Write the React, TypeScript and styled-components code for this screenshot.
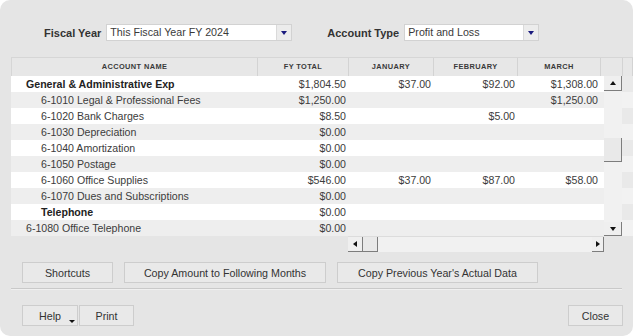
import React from "react";
import styled, { createGlobalStyle } from "styled-components";

const GlobalStyle = createGlobalStyle`
  html, body {
    margin: 0;
    padding: 0;
    background: #ffffff;
  }
  body {
    font-family: "Liberation Sans", Arial, sans-serif;
    color: #333333;
  }
`;

const Window = styled.div`
  width: 633px;
  height: 336px;
  background: #e5e5e5;
  border-radius: 10px;
  overflow: hidden;
  display: flex;
  flex-direction: column;
  font-size: 10.7px;
`;

const FilterBar = styled.div`
  display: flex;
  align-items: center;
  padding: 24px 0 0 44px;
  gap: 35px;
`;

const Field = styled.div`
  display: flex;
  align-items: center;
  gap: 5px;
`;

const Label = styled.span`
  font-weight: 700;
  font-size: 11px;
  color: #333;
`;

const Select = styled.div<{ $width: number }>`
  width: ${(p) => p.$width}px;
  height: 17px;
  box-sizing: border-box;
  border: 1px solid #d2d2d2;
  background: #ffffff;
  display: flex;
  align-items: stretch;
`;

const SelectText = styled.span`
  flex: 1;
  padding-left: 3px;
  line-height: 15px;
  font-size: 10.7px;
  color: #3a3a3a;
`;

const SelectArrow = styled.span`
  width: 14px;
  border-left: 1px solid #dadada;
  background: #ececec;
  display: flex;
  align-items: center;
  justify-content: center;
  &::after {
    content: "";
    border-left: 3px solid transparent;
    border-right: 3px solid transparent;
    border-top: 4px solid #1b1b7e;
  }
`;

const Table = styled.div`
  margin: 16px 0 0 11px;
  display: flex;
  flex-direction: column;
`;

const HeaderRow = styled.div`
  display: grid;
  grid-template-columns: 246px 91px 85px 84px 83px 22px 1fr;
  height: 19px;
  box-sizing: border-box;
  border-top: 1px solid #d6d6d6;
  border-left: 1px solid #d6d6d6;
  background: #e7e7e7;
`;

const HeaderCell = styled.div`
  border-right: 1px solid #d3d3d3;
  font-size: 7.4px;
  font-weight: 700;
  letter-spacing: 0.4px;
  color: #3a3a3a;
  text-align: center;
  line-height: 18px;
`;

const Body = styled.div`
  display: flex;
  height: 160px;
`;

const Rows = styled.div`
  width: 593px;
  display: flex;
  flex-direction: column;
`;

const Row = styled.div<{ $odd: boolean }>`
  display: grid;
  grid-template-columns: 246px 91px 85px 84px 83px 4px;
  height: 16px;
  background: ${(p) => (p.$odd ? "#eeeeee" : "#ffffff")};
  line-height: 16px;
  font-size: 10.6px;
  color: #3c3c3c;
`;

const NameCell = styled.div<{ $indent: number; $bold?: boolean }>`
  padding-left: ${(p) => p.$indent}px;
  font-weight: ${(p) => (p.$bold ? 700 : 400)};
  color: ${(p) => (p.$bold ? "#222" : "#3c3c3c")};
  white-space: nowrap;
`;

const ValueCell = styled.div`
  text-align: right;
  padding-right: 2px;
  white-space: nowrap;
`;

const VScroll = styled.div`
  width: 18px;
  display: flex;
  flex-direction: column;
  background: #f1f1f1;
`;

const ArrowButton = styled.div<{ $dir: "up" | "down" | "left" | "right"; $size: number }>`
  ${(p) =>
    p.$dir === "up" || p.$dir === "down"
      ? `height: ${p.$size}px;`
      : `width: ${p.$size}px;`}
  flex-shrink: 0;
  box-sizing: border-box;
  background: #efefef;
  border-right: 1px solid #7d7d7d;
  border-bottom: 1px solid #7d7d7d;
  display: flex;
  align-items: center;
  justify-content: center;
  &::after {
    content: "";
    ${(p) =>
      p.$dir === "up"
        ? "border-left: 3px solid transparent; border-right: 3px solid transparent; border-bottom: 4px solid #111;"
        : p.$dir === "down"
        ? "border-left: 3px solid transparent; border-right: 3px solid transparent; border-top: 4px solid #111;"
        : p.$dir === "left"
        ? "border-top: 3px solid transparent; border-bottom: 3px solid transparent; border-right: 4px solid #111;"
        : "border-top: 3px solid transparent; border-bottom: 3px solid transparent; border-left: 4px solid #111;"}
  }
`;

const Track = styled.div<{ $size: number }>`
  flex: 0 0 ${(p) => p.$size}px;
`;

const Thumb = styled.div<{ $vertical?: boolean }>`
  flex: 0 0 ${(p) => (p.$vertical ? 24 : 15)}px;
  box-sizing: border-box;
  background: #e9e9e9;
  border-right: 1px solid #7d7d7d;
  border-bottom: 1px solid #7d7d7d;
`;

const Filler = styled.div`
  flex: 1;
`;

const Tail = styled.div`
  flex: 1;
  background: repeating-linear-gradient(
    to bottom,
    #e9e9e9 0px,
    #e9e9e9 16px,
    #f2f2f2 16px,
    #f2f2f2 32px
  );
`;

const HScrollRow = styled.div`
  display: flex;
  height: 16px;
  padding-left: 337px;
`;

const HScroll = styled.div`
  width: 256px;
  display: flex;
  background: #f1f1f1;
  border-top: 1px solid #dcdcdc;
  box-sizing: border-box;
`;

const ActionRow = styled.div<{ $top: number }>`
  display: flex;
  align-items: center;
  padding: 0 10px 0 22px;
  margin-top: ${(p) => p.$top}px;
  gap: 11px;
`;

const Button = styled.button<{ $width: number }>`
  position: relative;
  width: ${(p) => p.$width}px;
  height: 21px;
  box-sizing: border-box;
  border: 1px solid #cdcdcd;
  background: #e9e9e9;
  font-family: "Liberation Sans", Arial, sans-serif;
  font-size: 10.7px;
  color: #333;
  padding: 0;
  cursor: pointer;
`;

const ButtonPair = styled.div`
  display: flex;
  gap: 1px;
`;

const Spacer = styled.div`
  flex: 1;
`;

const MenuMark = styled.span`
  position: absolute;
  right: 2px;
  bottom: 2px;
  border-left: 3px solid transparent;
  border-right: 3px solid transparent;
  border-top: 3px solid #111;
`;

const Separator = styled.div`
  margin: 5px 11px 0 11px;
  height: 1px;
  background: #c9c9c9;
  border-bottom: 1px solid #f0f0f0;
`;

type Line = {
  name: string;
  indent: number;
  bold?: boolean;
  fy: string;
  jan?: string;
  feb?: string;
  mar?: string;
};

const lines: Line[] = [
  { name: "General & Administrative Exp", indent: 15, bold: true, fy: "$1,804.50", jan: "$37.00", feb: "$92.00", mar: "$1,308.00" },
  { name: "6-1010 Legal & Professional Fees", indent: 30, fy: "$1,250.00", mar: "$1,250.00" },
  { name: "6-1020 Bank Charges", indent: 30, fy: "$8.50", feb: "$5.00" },
  { name: "6-1030 Depreciation", indent: 30, fy: "$0.00" },
  { name: "6-1040 Amortization", indent: 30, fy: "$0.00" },
  { name: "6-1050 Postage", indent: 30, fy: "$0.00" },
  { name: "6-1060 Office Supplies", indent: 30, fy: "$546.00", jan: "$37.00", feb: "$87.00", mar: "$58.00" },
  { name: "6-1070 Dues and Subscriptions", indent: 30, fy: "$0.00" },
  { name: "Telephone", indent: 30, bold: true, fy: "$0.00" },
  { name: "6-1080 Office Telephone", indent: 15, fy: "$0.00" },
];

const headers = ["ACCOUNT NAME", "FY TOTAL", "JANUARY", "FEBRUARY", "MARCH", "", ""];

const App = () => {
  return (
    <>
      <GlobalStyle />
      <Window>
        <FilterBar>
          <Field>
            <Label>Fiscal Year</Label>
            <Select $width={186}>
              <SelectText>This Fiscal Year FY 2024</SelectText>
              <SelectArrow />
            </Select>
          </Field>
          <Field>
            <Label>Account Type</Label>
            <Select $width={135}>
              <SelectText>Profit and Loss</SelectText>
              <SelectArrow />
            </Select>
          </Field>
        </FilterBar>

        <Table>
          <HeaderRow>
            {headers.map((h, i) => (
              <HeaderCell key={i}>{h}</HeaderCell>
            ))}
          </HeaderRow>
          <Body>
            <Rows>
              {lines.map((l, i) => (
                <Row key={i} $odd={i % 2 === 1}>
                  <NameCell $indent={l.indent} $bold={l.bold}>
                    {l.name}
                  </NameCell>
                  <ValueCell>{l.fy}</ValueCell>
                  <ValueCell>{l.jan}</ValueCell>
                  <ValueCell>{l.feb}</ValueCell>
                  <ValueCell>{l.mar}</ValueCell>
                  <div />
                </Row>
              ))}
            </Rows>
            <VScroll>
              <ArrowButton $dir="up" $size={15} />
              <Track $size={47} />
              <Thumb $vertical />
              <Filler />
              <ArrowButton $dir="down" $size={14} />
            </VScroll>
            <Tail />
          </Body>
          <HScrollRow>
            <HScroll>
              <ArrowButton $dir="left" $size={15} />
              <Thumb />
              <Filler />
              <ArrowButton $dir="right" $size={12} />
            </HScroll>
          </HScrollRow>
        </Table>

        <ActionRow $top={10}>
          <Button $width={91}>Shortcuts</Button>
          <Button $width={202}>Copy Amount to Following Months</Button>
          <Button $width={201}>Copy Previous Year's Actual Data</Button>
        </ActionRow>
        <Separator />
        <ActionRow $top={15}>
          <ButtonPair>
            <Button $width={56}>
              Help
              <MenuMark />
            </Button>
            <Button $width={55}>Print</Button>
          </ButtonPair>
          <Spacer />
          <Button $width={55}>Close</Button>
        </ActionRow>
      </Window>
    </>
  );
};

export default App;
